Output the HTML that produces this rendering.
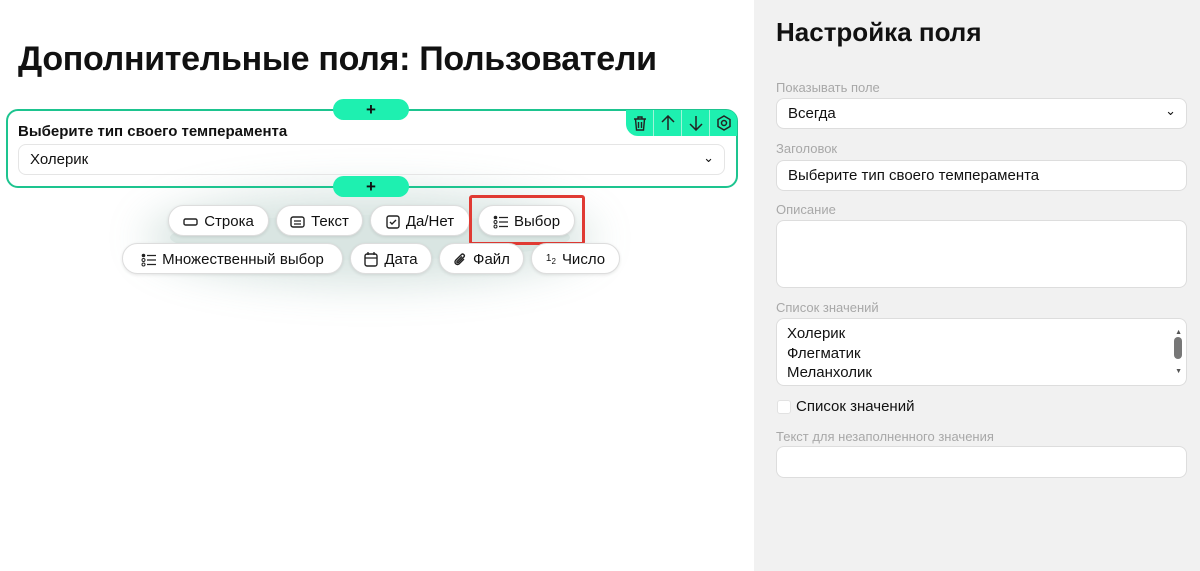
<!DOCTYPE html>
<html><head><meta charset="utf-8">
<style>
*{box-sizing:border-box;margin:0;padding:0}
body{width:1200px;height:571px;overflow:hidden;background:#fff;font-family:"Liberation Sans","DejaVu Sans",sans-serif;color:#111;position:relative}
.abs{position:absolute}
h1{position:absolute;left:18px;top:40px;font-size:34px;font-weight:700;letter-spacing:-0.3px}
.card{left:6px;top:109px;width:732px;height:79px;border:2px solid #1dc48f;border-radius:12px}
.plus{width:76px;height:21px;background:#1ef0b0;border-radius:11px;text-align:center;font-size:17px;line-height:21px;font-weight:700}
.tb{left:626px;top:110px;width:111px;height:26px;background:#1ef0b0;border-radius:0 10px 0 12px;display:flex}
.tb div{flex:1;border-left:1px solid #9ff5d8;display:flex;align-items:center;justify-content:center}
.tb div:first-child{border-left:none}
.lbl{left:18px;top:123px;font-size:15px;font-weight:700}
.sel{left:18px;top:144px;width:707px;height:31px;border:1px solid #e5e5e5;border-radius:8px;font-size:15px;padding:6px 11px}
.glow{left:170px;top:215px;width:400px;height:45px;border-radius:50%;box-shadow:0 0 40px 25px rgba(120,160,150,.28);background:rgba(120,160,150,.28)}
.chip{height:31px;background:#fff;border:1px solid #ddd;border-radius:16px;font-size:15px;display:flex;align-items:center;justify-content:center;gap:6px;box-shadow:0 1px 3px rgba(0,0,0,.1);padding-top:2px}
.red{left:469px;top:195px;width:116px;height:50px;border:3px solid #e03a33;border-radius:3px}
.rp{left:754px;top:0;width:446px;height:571px;background:#f1f1f1}
.rp h2{position:absolute;left:22px;top:17px;font-size:26px;font-weight:700}
.fl{position:absolute;left:22px;font-size:13px;color:#a8a8a8}
.fi{position:absolute;left:22px;width:411px;background:#fff;border:1px solid #ddd;border-radius:8px;font-size:15px;padding:6px 11px}
</style></head><body>
<h1>Дополнительные поля: Пользователи</h1>
<div class="abs glow"></div>
<div class="abs card"></div>
<div class="abs tb">
<div><svg width="14" height="15" viewBox="0 0 14 15" fill="none" stroke="#222" stroke-width="1.4"><path d="M1 3h12M5 3V1h4v2M2.5 3l1 11h7l1-11M5.5 6v6M8.5 6v6"/></svg></div>
<div><svg width="14" height="16" viewBox="0 0 14 16" fill="none" stroke="#222" stroke-width="1.5"><path d="M7 15V1M1 7l6-6 6 6"/></svg></div>
<div><svg width="14" height="16" viewBox="0 0 14 16" fill="none" stroke="#222" stroke-width="1.5"><path d="M7 1v14M1 9l6 6 6-6"/></svg></div>
<div><svg width="16" height="16" viewBox="0 0 16 16" fill="none" stroke="#222" stroke-width="1.5"><path d="M8 1l6 3.5v7L8 15l-6-3.5v-7z"/><circle cx="8" cy="8" r="2.5"/></svg></div>
</div>
<div class="abs plus" style="left:333px;top:99px">+</div>
<div class="abs plus" style="left:333px;top:176px">+</div>
<div class="abs lbl">Выберите тип своего темперамента</div>
<div class="abs sel">Холерик<span style="position:absolute;right:10px;top:5px;font-size:13px">&#8964;</span></div>

<div class="abs chip" style="left:168px;top:205px;width:101px"><svg width="15" height="8"><rect x="1" y="1" width="13" height="6" rx="1.5" fill="none" stroke="#222" stroke-width="1.4"/></svg>Строка</div>
<div class="abs chip" style="left:276px;top:205px;width:87px"><svg width="15" height="12"><rect x="1" y="1" width="13" height="10" rx="2" fill="none" stroke="#222" stroke-width="1.4"/><path d="M4 5h7M4 8h7" stroke="#222" stroke-width="1.2"/></svg>Текст</div>
<div class="abs chip" style="left:370px;top:205px;width:100px"><svg width="14" height="14"><rect x="1" y="1" width="12" height="12" rx="2" fill="none" stroke="#222" stroke-width="1.4"/><path d="M4 7l2 2 4-4" fill="none" stroke="#222" stroke-width="1.4"/></svg>Да/Нет</div>
<div class="abs chip" style="left:478px;top:205px;width:97px"><svg width="15" height="14"><circle cx="2.5" cy="2.5" r="1.8" fill="#222"/><circle cx="2.5" cy="7" r="1.5" fill="none" stroke="#222"/><circle cx="2.5" cy="11.5" r="1.5" fill="none" stroke="#222"/><path d="M6 2.5h9M6 7h9M6 11.5h9" stroke="#222" stroke-width="1.3"/></svg>Выбор</div>
<div class="abs red"></div>
<div class="abs chip" style="left:122px;top:243px;width:221px"><svg width="15" height="14"><circle cx="2.5" cy="2.5" r="1.8" fill="#222"/><circle cx="2.5" cy="7" r="1.5" fill="none" stroke="#222"/><circle cx="2.5" cy="11.5" r="1.5" fill="none" stroke="#222"/><path d="M6 2.5h9M6 7h9M6 11.5h9" stroke="#222" stroke-width="1.3"/></svg>Множественный выбор</div>
<div class="abs chip" style="left:350px;top:243px;width:82px"><svg width="14" height="15"><rect x="1" y="2" width="12" height="12" rx="2" fill="none" stroke="#222" stroke-width="1.4"/><path d="M1 6h12M4 0v3M10 0v3" stroke="#222" stroke-width="1.3"/></svg>Дата</div>
<div class="abs chip" style="left:439px;top:243px;width:85px"><svg width="14" height="16" viewBox="0 0 14 16"><path d="M11 7l-5 5a2.5 2.5 0 01-3.5-3.5l6-6a1.7 1.7 0 012.4 2.4l-5.8 5.8a.8.8 0 01-1.1-1.1L9 4.5" fill="none" stroke="#222" stroke-width="1.4"/></svg>Файл</div>
<div class="abs chip" style="left:531px;top:243px;width:89px"><span style="font-size:10px">1<sub style="font-size:8px">2</sub></span>Число</div>

<div class="abs rp">
<h2>Настройка поля</h2>
<div class="fl" style="top:80px">Показывать поле</div>
<div class="fi" style="top:98px;height:31px">Всегда<span style="position:absolute;right:10px;top:4px;font-size:13px">&#8964;</span></div>
<div class="fl" style="top:141px">Заголовок</div>
<div class="fi" style="top:160px;height:31px">Выберите тип своего темперамента</div>
<div class="fl" style="top:202px">Описание</div>
<div class="fi" style="top:220px;height:68px"></div>
<div class="fl" style="top:300px">Список значений</div>
<div class="fi" style="top:318px;height:68px;padding:5px 10px;line-height:19.5px">Холерик<br>Флегматик<br>Меланхолик
<div style="position:absolute;right:4px;top:4px;font-size:7px;color:#555">&#9650;</div>
<div style="position:absolute;right:4px;top:18px;width:8px;height:22px;background:#777;border-radius:4px"></div>
<div style="position:absolute;right:4px;bottom:4px;font-size:7px;color:#555">&#9660;</div>
</div>
<div style="position:absolute;left:23px;top:400px;width:14px;height:14px;background:#fff;border:1px solid #e2e2e2;border-radius:3px"></div>
<div style="position:absolute;left:42px;top:398px;font-size:15px">Список значений</div>
<div class="fl" style="top:429px">Текст для незаполненного значения</div>
<div class="fi" style="top:446px;height:32px"></div>
</div>
</body></html>
